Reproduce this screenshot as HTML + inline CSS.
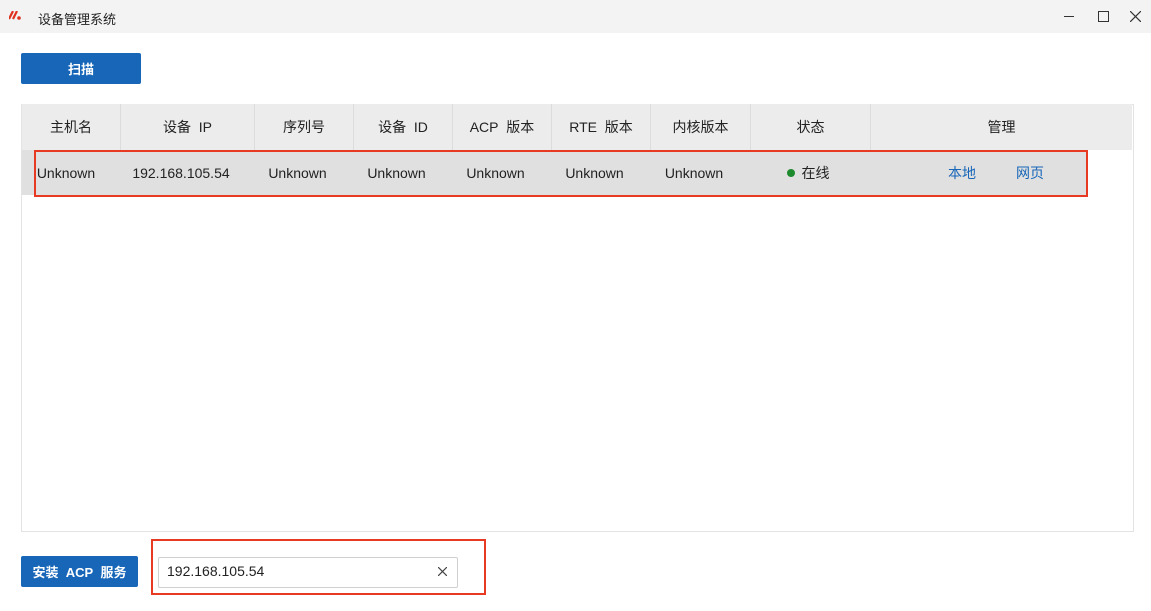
<!DOCTYPE html><html><head><style>
body{margin:0;width:1151px;height:611px;background:#fff;font-family:"Liberation Sans","Noto Sans CJK SC",sans-serif;position:relative;overflow:hidden;color:#222}
.a{position:absolute}
.tb{left:0;top:0;width:1151px;height:33px;background:#f3f3f3}
.btn{background:#1766b8;color:#fff;font-size:13px;font-weight:bold;display:flex;align-items:center;justify-content:center;border-radius:2px}
.cell{position:absolute;display:flex;align-items:center;justify-content:center;font-size:14px}
.hd{top:104px;height:46px;border-right:1px solid #dcdcdc;box-sizing:border-box}
.rw{top:150px;height:45px}
</style></head><body>
<div class="a tb"></div>
<svg class="a" style="left:9px;top:11px" width="16" height="10" viewBox="0 0 16 10"><path d="M4 0 L0 8 M8 0 L4 8" stroke="#e0301e" stroke-width="2.2" fill="none"/><circle cx="10" cy="7" r="1.8" fill="#e0301e"/></svg>
<div class="a" style="left:38px;top:9px;font-size:13px">设备管理系统</div>
<div class="a" style="left:1064px;top:16px;width:10px;height:1px;background:#333"></div>
<div class="a" style="left:1098px;top:11px;width:9px;height:9px;border:1px solid #333"></div>
<svg class="a" style="left:1130px;top:11px" width="11" height="11"><path d="M0 0 L11 11 M11 0 L0 11" stroke="#333" stroke-width="1.2"/></svg>
<div class="a btn" style="left:21px;top:53px;width:120px;height:31px">扫描</div>
<div class="a" style="left:21px;top:104px;width:1111px;height:426px;border:1px solid #e3e3e3"></div>
<div class="a" style="left:22px;top:104px;width:1110px;height:46px;background:#ececec"></div>
<div class="a" style="left:22px;top:150px;width:1066px;height:45px;background:#e0e0e0"></div>
<div class="cell hd" style="left:22px;width:99px">主机名</div>
<div class="cell hd" style="left:121px;width:134px">设备&nbsp; IP</div>
<div class="cell hd" style="left:255px;width:99px">序列号</div>
<div class="cell hd" style="left:354px;width:99px">设备&nbsp; ID</div>
<div class="cell hd" style="left:453px;width:99px">ACP&nbsp; 版本</div>
<div class="cell hd" style="left:552px;width:99px">RTE&nbsp; 版本</div>
<div class="cell hd" style="left:651px;width:100px">内核版本</div>
<div class="cell hd" style="left:751px;width:120px">状态</div>
<div class="cell hd" style="left:871px;width:261px;border:none">管理</div>
<div class="cell rw" style="left:12px;width:108px">Unknown</div>
<div class="cell rw" style="left:121px;width:120px">192.168.105.54</div>
<div class="cell rw" style="left:248px;width:99px">Unknown</div>
<div class="cell rw" style="left:347px;width:99px">Unknown</div>
<div class="cell rw" style="left:446px;width:99px">Unknown</div>
<div class="cell rw" style="left:545px;width:99px">Unknown</div>
<div class="cell rw" style="left:644px;width:100px">Unknown</div>
<div class="cell rw" style="left:778px;width:60px"><span style="display:inline-block;width:8px;height:8px;border-radius:50%;background:#1d8a2e;margin-right:7px"></span>在线</div>
<div class="cell rw" style="left:942px;width:40px;color:#1766b8">本地</div>
<div class="cell rw" style="left:1010px;width:40px;color:#1766b8">网页</div>
<div class="a" style="left:34px;top:150px;width:1050px;height:43px;border:2px solid #e83a22"></div>
<div class="a btn" style="left:21px;top:556px;width:117px;height:31px">安装&nbsp; ACP&nbsp; 服务</div>
<div class="a" style="left:151px;top:539px;width:331px;height:52px;border:2px solid #e83a22"></div>
<div class="a" style="left:158px;top:557px;width:298px;height:29px;border:1px solid #d0d0d0;border-radius:2px"></div>
<div class="a" style="left:167px;top:563px;font-size:14px">192.168.105.54</div>
<svg class="a" style="left:438px;top:567px" width="9" height="9"><path d="M0 0 L9 9 M9 0 L0 9" stroke="#444" stroke-width="1.2"/></svg>
</body></html>
